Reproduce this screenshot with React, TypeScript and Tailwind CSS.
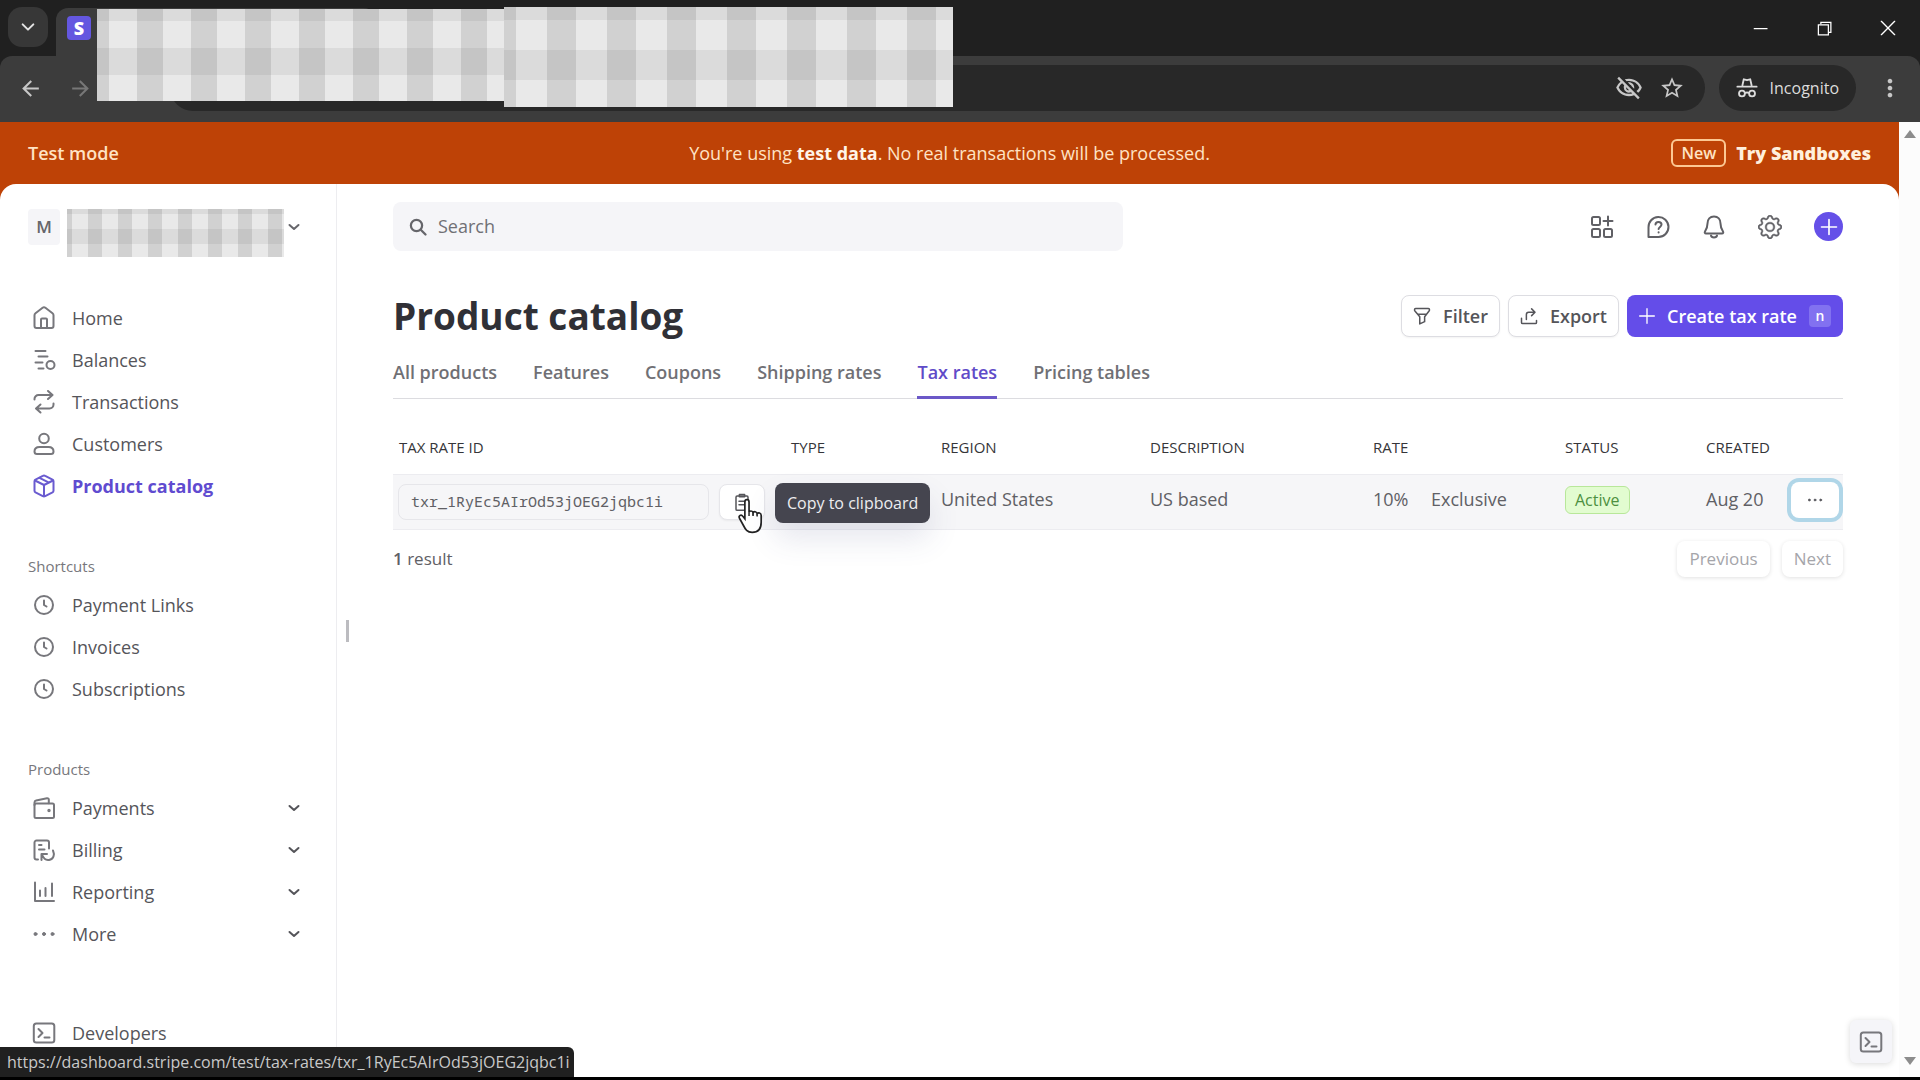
import React, { useId, useState } from "react";
import {
  MdArrowBack,
  MdArrowForward,
  MdMoreVert,
  MdOutlineVisibilityOff,
  MdStarOutline,
} from "react-icons/md";
import { BsGear } from "react-icons/bs";
import { VscChromeMinimize, VscChromeRestore } from "react-icons/vsc";

type IconProps = { className?: string; children?: React.ReactNode; strokeWidth?: number };

function Icon({ className = "size-6", children, strokeWidth = 2 }: IconProps) {
  return (
    <svg
      viewBox="0 0 24 24"
      fill="none"
      stroke="currentColor"
      strokeWidth={strokeWidth}
      strokeLinecap="round"
      strokeLinejoin="round"
      className={`shrink-0 ${className}`}
      aria-hidden="true"
    >
      {children}
    </svg>
  );
}

const icons = {
  home: (
    <>
      <path d="M2.5 9.2c0-.8.4-1.5 1-2L10.6 1.7a2.3 2.3 0 0 1 2.8 0L20.5 7.2c.6.5 1 1.2 1 2V20a2 2 0 0 1-2 2h-15a2 2 0 0 1-2-2z" />
      <path d="M9 22v-8.5a1 1 0 0 1 1-1h4a1 1 0 0 1 1 1V22" />
    </>
  ),
  balances: (
    <>
      <path d="M3.5 3h10M6.5 8.5h9M3.5 14.5h7M6.5 20.5h5" />
      <circle cx="18.5" cy="17" r="4" />
    </>
  ),
  transactions: (
    <>
      <path d="M2.5 9.5V9a4 4 0 0 1 4-4H20M16 1l4.5 4L16 9" />
      <path d="M21.5 13.5v1a4 4 0 0 1-4 4H4.5M8.5 14.5l-4.5 4 4.5 4" />
    </>
  ),
  customers: (
    <>
      <circle cx="12" cy="6.5" r="4.8" />
      <path d="M2.5 19.5c0-3.2 2.2-4.5 5-4.5h9c2.8 0 5 1.3 5 4.5 0 1.7-1 2.5-2.5 2.5H5c-1.5 0-2.5-.8-2.5-2.5z" />
    </>
  ),
  catalog: (
    <>
      <path d="M10.8 1.9a2.5 2.5 0 0 1 2.4 0l7.3 3.7c.7.4 1 1 1 1.7v9.4c0 .7-.3 1.3-1 1.7l-7.3 3.7a2.5 2.5 0 0 1-2.4 0l-7.3-3.7c-.7-.4-1-1-1-1.7V7.3c0-.7.3-1.3 1-1.7z" />
      <path d="M3 6.5l9 4.5 9-4.5M12 11v11M7.5 3.8l9 4.6" />
    </>
  ),
  clock: (
    <>
      <circle cx="12" cy="12" r="9" />
      <path d="M12 7.5V12l2.5 1.5" />
    </>
  ),
  payments: (
    <>
      <rect x="2.5" y="7.5" width="19.5" height="14.5" rx="1.5" />
      <path d="M2.5 9V6.5c0-1 .6-1.8 1.6-2L15 2.2c1-.2 1.8.4 1.8 1.4v3.6" />
      <circle cx="17" cy="14.5" r=".7" fill="currentColor" />
    </>
  ),
  billing: (
    <>
      <path d="M6 21.5H4.5a2 2 0 0 1-2-2v-15a2 2 0 0 1 2-2H15a2 2 0 0 1 2 2v6" />
      <path d="M7 7h2.5M7 11.5h5.5" />
      <path d="M9.5 22v-6h5.5M10 16.5c1.5 4 4 6 7 5.5 4.5-.8 6-5 4-9.5" />
    </>
  ),
  reporting: <path d="M3 2.5v18.5h19M8 16v-5.5M13.5 16V8M20 16V3.5" />,
  more: (
    <g fill="currentColor" strokeWidth="1">
      <circle cx="3.5" cy="12" r="1.5" />
      <circle cx="12" cy="12" r="1.5" />
      <circle cx="20.5" cy="12" r="1.5" />
    </g>
  ),
  terminal: (
    <>
      <rect x="1.8" y="2.5" width="20.5" height="19" rx="2.5" />
      <path d="M6.5 8l4 4-4 4M12.5 16.5h5" />
    </>
  ),
};

type NavItem = { label: string; icon: keyof typeof icons; active?: boolean; expandable?: boolean };

const mainNav: NavItem[] = [
  { label: "Home", icon: "home" },
  { label: "Balances", icon: "balances" },
  { label: "Transactions", icon: "transactions" },
  { label: "Customers", icon: "customers" },
  { label: "Product catalog", icon: "catalog", active: true },
];

const shortcuts: NavItem[] = [
  { label: "Payment Links", icon: "clock" },
  { label: "Invoices", icon: "clock" },
  { label: "Subscriptions", icon: "clock" },
];

const products: NavItem[] = [
  { label: "Payments", icon: "payments", expandable: true },
  { label: "Billing", icon: "billing", expandable: true },
  { label: "Reporting", icon: "reporting", expandable: true },
  { label: "More", icon: "more", expandable: true },
];

const tabs = ["All products", "Features", "Coupons", "Shipping rates", "Tax rates", "Pricing tables"];

const taxRates = [
  {
    id: "txr_1RyEc5AIrOd53jOEG2jqbc1i",
    region: "United States",
    description: "US based",
    rate: "10%",
    mode: "Exclusive",
    status: "Active",
    created: "Aug 20",
  },
];

// Checkered block that hides private text
function Mosaic({ className, cell, x, y }: { className: string; cell: number; x: number; y: number }) {
  const id = useId();
  return (
    <svg className={className} aria-hidden="true">
      <defs>
        <pattern id={`${id}c`} x={x} width={cell * 2} height={cell * 2} patternUnits="userSpaceOnUse">
          <rect width={cell - 1} height={cell * 2} fill="#000" opacity="0.1" />
        </pattern>
        <pattern id={`${id}r`} y={y} width={cell * 2} height={cell * 2} patternUnits="userSpaceOnUse">
          <rect width={cell * 2} height={cell} fill="#000" opacity="0.06" />
        </pattern>
      </defs>
      <rect width="100%" height="100%" fill="#e9e9e9" />
      <rect width="100%" height="100%" fill={`url(#${id}c)`} />
      <rect width="100%" height="100%" fill={`url(#${id}r)`} />
    </svg>
  );
}

function Chevron() {
  return (
    <Icon className="size-3" strokeWidth={4}>
      <path d="M3 8l9 8 9-8" />
    </Icon>
  );
}

function BrowserChrome() {
  return (
    <header className="relative bg-[#202020] text-[#c7c7c7]">
      <div className="flex h-14 items-end">
        <button aria-label="Search tabs" className="mb-[9px] ml-2 flex size-10 items-center justify-center rounded-[14px] bg-[#373737] text-[#e3e3e3]">
          <Icon className="size-4" strokeWidth={3}>
            <path d="M4 8l8 8 8-8" />
          </Icon>
        </button>
        <div className="ml-2 flex h-12 w-80 items-start rounded-t-xl bg-[#3c3c3c] px-[11px] pt-2">
          <span className="flex size-6 items-center justify-center rounded-sm bg-[#6457e0] text-lg font-extrabold text-white">S</span>
        </div>
        <div className="ml-auto flex h-full items-center text-white">
          <button aria-label="Minimize" className="flex w-16 justify-center">
            <VscChromeMinimize className="size-5" />
          </button>
          <button aria-label="Restore" className="flex w-16 justify-center">
            <VscChromeRestore className="size-5" />
          </button>
          <button aria-label="Close" className="flex w-16 justify-center">
            <Icon className="size-4" strokeWidth={2}>
              <path d="M2 2l20 20M22 2L2 22" />
            </Icon>
          </button>
        </div>
      </div>
      <div className="flex h-[66px] items-center rounded-t-xl bg-[#3c3c3c] pb-[2px]">
        <button aria-label="Back" className="ml-[18px]">
          <MdArrowBack className="size-[25px]" />
        </button>
        <button aria-label="Forward" className="ml-[25px] text-[#777]">
          <MdArrowForward className="size-[25px]" />
        </button>
        <div className="ml-[77px] flex h-[46px] flex-1 items-center gap-4 rounded-full bg-[#282828] pr-5">
          <input aria-label="Address" className="h-full min-w-0 flex-1 bg-transparent pl-6 outline-none" />
          <button aria-label="Third-party cookies blocked">
            <MdOutlineVisibilityOff className="size-7" />
          </button>
          <button aria-label="Bookmark">
            <MdStarOutline className="size-[26px]" />
          </button>
        </div>
        <button className="ml-[14px] flex h-[46px] items-center gap-3 rounded-full bg-[#282828] px-[17px] text-base text-[#dcdcdc]">
          <Icon className="size-[22px]">
            <path d="M7 9l1.5-6.5L12 3.5l3.5-1L17 9M1.5 10.5h21" />
            <circle cx="6.5" cy="18" r="3.2" />
            <circle cx="17.5" cy="18" r="3.2" />
            <path d="M9.7 17.5q2.3-1.2 4.6 0" />
          </Icon>
          Incognito
        </button>
        <button aria-label="Browser menu" className="mr-4 ml-5">
          <MdMoreVert className="size-7" />
        </button>
      </div>
      <Mosaic className="absolute top-[9px] left-[97px] h-[92px] w-[407px]" cell={27} x={40} y={39} />
      <Mosaic className="absolute top-[7px] left-[504px] h-[100px] w-[449px]" cell={30} x={43} y={43} />
    </header>
  );
}

function TestBanner() {
  return (
    <div className="flex h-[62px] items-center justify-between bg-[#be4206] px-7 text-[18px] text-[#ffe3c4]">
      <strong className="w-[300px] font-semibold">Test mode</strong>
      <p className="font-medium">
        You're using <strong className="font-bold text-[#fff5e8]">test data</strong>. No real transactions will be processed.
      </p>
      <div className="flex w-[300px] items-center justify-end gap-[10px]">
        <span className="flex h-7 items-center rounded-md border-2 border-[#fcc893] px-2 text-[16px] font-semibold">New</span>
        <a href="#sandboxes" className="font-extrabold whitespace-nowrap text-[#fff0dd]">Try Sandboxes</a>
      </div>
    </div>
  );
}

function NavList({ items }: { items: NavItem[] }) {
  return (
    <ul>
      {items.map((item) => {
        const content = (
          <>
            <Icon className={`size-6 ${item.active ? "text-[#6a5bd0]" : "text-[#77777c]"}`}>{icons[item.icon]}</Icon>
            <span className="flex-1 text-left">{item.label}</span>
            {item.expandable && <Chevron />}
          </>
        );
        const style = `flex h-[42px] w-full items-center gap-4 pr-9 pl-8 text-[18px] ${
          item.active ? "font-bold text-[#5f4bd0]" : "text-[#55555a]"
        }`;
        return (
          <li key={item.label}>
            {item.expandable ? (
              <button className={style}>{content}</button>
            ) : (
              <a href="#nav" className={style}>{content}</a>
            )}
          </li>
        );
      })}
    </ul>
  );
}

function Sidebar() {
  return (
    <nav className="w-[337px] shrink-0 border-r border-[#ededf0] pt-[25px]">
      <button className="flex w-full items-start pl-7">
        <span className="flex h-9 w-8 items-center justify-center rounded bg-[#f5f5f8] text-[17px] font-semibold text-[#66666b]">M</span>
        <Mosaic className="ml-[7px] h-12 w-[217px]" cell={15} x={21} y={20} />
        <span className="flex h-9 items-center pl-1 text-[#66666b]">
          <Chevron />
        </span>
      </button>
      <div className="mt-10">
        <NavList items={mainNav} />
      </div>
      <h2 className="mt-[47px] mb-[6px] pl-7 text-[15px] leading-6 text-[#77777c]">Shortcuts</h2>
      <NavList items={shortcuts} />
      <h2 className="mt-[47px] mb-[6px] pl-7 text-[15px] leading-6 text-[#77777c]">Products</h2>
      <NavList items={products} />
      <div className="mt-[57px]">
        <NavList items={[{ label: "Developers", icon: "terminal" }]} />
      </div>
    </nav>
  );
}

function TopBar() {
  return (
    <div className="flex items-center justify-between">
      <label className="flex h-[49px] w-[730px] items-center gap-[11px] rounded-lg bg-[#f5f5f8] px-4 text-[#66666b]">
        <Icon className="size-[18px]" strokeWidth={3}>
          <circle cx="10" cy="10" r="7.5" />
          <path d="M16 16l6 6" />
        </Icon>
        <input type="search" aria-label="Search" placeholder="Search" className="flex-1 bg-transparent text-[18px] outline-none placeholder:text-[#707075]" />
      </label>
      <div className="flex items-center gap-8 text-[#606065]">
        <button aria-label="Apps">
          <Icon>
            <rect x="2" y="2" width="8" height="8" rx="1.5" />
            <rect x="2" y="14" width="8" height="8" rx="1.5" />
            <rect x="14" y="14" width="8" height="8" rx="1.5" />
            <path d="M18 1.5v9M13.5 6h9" />
          </Icon>
        </button>
        <button aria-label="Help">
          <Icon>
            <path d="M2.5 22v-9.5A10 10 0 1 1 12.5 22z" />
            <path d="M9.5 9.5c.1-3.5 6-3.3 6 .1 0 2.2-2.8 2.4-2.9 4.4M12.6 17.3v.2" />
          </Icon>
        </button>
        <button aria-label="Notifications">
          <Icon>
            <path d="M12 1.5c-4 0-6.5 3-6.5 7 0 4-.8 5.5-2.5 8-.6.9-.2 2 1 2h16c1.2 0 1.6-1.1 1-2-1.7-2.5-2.5-4-2.5-8 0-4-2.5-7-6.5-7z" />
            <path d="M9 20.5c.5 2.5 5.5 2.5 6 0" />
          </Icon>
        </button>
        <button aria-label="Settings">
          <BsGear className="size-6" stroke="currentColor" strokeWidth={0.3} />
        </button>
        <button aria-label="Create" className="flex size-[29px] items-center justify-center rounded-full bg-[#6550e8] text-white">
          <Icon className="size-5" strokeWidth={2}>
            <path d="M12 3v18M3 12h18" />
          </Icon>
        </button>
      </div>
    </div>
  );
}

const outlineButton =
  "flex h-[42px] items-center gap-3 rounded-lg border border-[#dddde2] bg-white px-[11px] text-[18px] font-semibold text-[#55555a] shadow-xs";

function TaxRateTable() {
  return (
    <table className="mt-[21px] w-full table-fixed text-left text-[18px] text-[#606065]">
      <colgroup>
        <col className="w-[392px]" />
        <col className="w-[150px]" />
        <col className="w-[209px]" />
        <col className="w-[223px]" />
        <col className="w-[58px]" />
        <col className="w-[134px]" />
        <col className="w-[141px]" />
        <col className="w-[85px]" />
        <col className="w-[58px]" />
      </colgroup>
      <thead>
        <tr className="h-[54px] text-[15px] whitespace-nowrap text-[#353539] [&>th]:px-[6px] [&>th]:font-medium">
          <th>TAX RATE ID</th>
          <th>TYPE</th>
          <th>REGION</th>
          <th>DESCRIPTION</th>
          <th colSpan={2}>RATE</th>
          <th>STATUS</th>
          <th>CREATED</th>
          <th aria-label="Actions" />
        </tr>
      </thead>
      <tbody>
        {taxRates.map((t) => (
          <tr key={t.id} className="h-[55px] border-y border-[#ececf0] bg-[#f6f6f8] whitespace-nowrap [&>td]:px-[6px] [&>td]:pb-1">
            <td className="!pb-0 !pl-[5px]">
              <div className="flex items-center gap-[10px]">
                <a href="#txr" className="flex h-9 w-[311px] items-center rounded-lg border border-[#e6e6ea] pl-3 font-['Noto_Sans_Mono','DejaVu_Sans_Mono',monospace] text-[15px]">
                  {t.id}
                </a>
                <div className="relative">
                  <button aria-label="Copy to clipboard" className="flex h-9 w-[46px] items-center justify-center rounded-lg border border-[#e6e6ea] bg-white text-[#55555a] shadow-xs">
                    <Icon className="size-[18px]">
                      <rect x="4" y="4" width="16" height="19" rx="1.5" />
                      <path d="M8.5 5V2h7v3zM8 11h8M8 15.5h8" />
                    </Icon>
                  </button>
                  <svg viewBox="0 0 24 32" className="absolute top-[14px] left-[18px] h-9 w-[27px]" aria-hidden="true">
                    <path
                      d="M7 3.5c0-2.7 3.7-2.7 3.7 0V13c.3-2 3.3-1.9 3.6.2.7-1.6 3.3-1.3 3.6.8 1-1.3 3.6-.9 3.6 1.5v6c0 6-2.5 9-8 9-4.5 0-6-2.5-8-6.5l-3.3-6c-1.2-2.3 1.5-3.7 3-1.7L7 18.5z"
                      fill="#fff"
                      stroke="#222"
                      strokeWidth="1.5"
                    />
                    <path d="M10.7 13v3M14.3 13.5V16M17.9 14.5v2" stroke="#222" strokeWidth="1.3" />
                  </svg>
                  <span role="tooltip" className="absolute -top-px left-full ml-[10px] flex h-10 items-center rounded-lg bg-[#45454f] px-3 text-base text-[#ededf0] shadow-[0_16px_30px_rgba(60,66,120,0.13)]">
                    Copy to clipboard
                  </span>
                </div>
              </div>
            </td>
            <td />
            <td>{t.region}</td>
            <td>{t.description}</td>
            <td>{t.rate}</td>
            <td>{t.mode}</td>
            <td>
              <span className="inline-flex h-7 items-center rounded-md border border-[#b8e79a] bg-[#e2fcd0] px-[9px] align-middle text-[16px] text-[#4d9040]">
                {t.status}
              </span>
            </td>
            <td>{t.created}</td>
            <td className="!px-0">
              <button aria-label="More actions" className="mr-1 ml-auto flex h-9 w-12 items-center justify-center rounded-lg bg-white text-[#55555a] shadow-[0_0_0_4px_#b0d6e8]">
                <Icon className="size-4">{icons.more}</Icon>
              </button>
            </td>
          </tr>
        ))}
      </tbody>
    </table>
  );
}

function Catalog() {
  const [activeTab, setActiveTab] = useState("Tax rates");
  return (
    <main className="min-w-0 flex-1 px-14 pt-[18px]">
      <TopBar />
      <div className="mt-11 flex items-center justify-between">
        <h1 className="text-[37px] leading-[42px] font-bold text-[#303036]">Product catalog</h1>
        <div className="flex gap-2">
          <button className={outlineButton}>
            <Icon className="size-[18px]" strokeWidth={2}>
              <path d="M2 3.5q0-1.5 1.5-1.5h17q1.5 0 1.5 1.5 0 1-.6 1.8L15.5 13v6.5L9 22.5V13L2.6 5.3Q2 4.5 2 3.5zM7 9.5h10" />
            </Icon>
            Filter
          </button>
          <button className={outlineButton}>
            <Icon className="size-[18px]" strokeWidth={2}>
              <path d="M2 15v5.5a1.5 1.5 0 0 0 1.5 1.5h17a1.5 1.5 0 0 0 1.5-1.5V18M8.5 16.5V10a3 3 0 0 1 3-3H20M15.5 2.5L20 7l-4.5 4.5" />
            </Icon>
            Export
          </button>
          <button className="flex h-[42px] items-center gap-3 rounded-lg bg-[#644de9] px-3 text-[18px] font-semibold text-white">
            <Icon className="size-4" strokeWidth={2}>
              <path d="M12 1v22M1 12h22" />
            </Icon>
            Create tax rate
            <kbd className="flex size-[22px] items-center justify-center rounded bg-[#8271f0] font-['Open_Sans',sans-serif] text-sm">n</kbd>
          </button>
        </div>
      </div>
      <div role="tablist" className="mt-4 flex gap-9 border-b border-[#dcdce0]">
        {tabs.map((tab) => (
          <button
            key={tab}
            role="tab"
            aria-selected={tab === activeTab}
            onClick={() => setActiveTab(tab)}
            className={`-mb-px h-[46px] border-b-[3px] pb-1 text-[18px] font-semibold ${
              tab === activeTab ? "border-[#6b58c8] text-[#5f4bc8]" : "border-transparent text-[#707075]"
            }`}
          >
            {tab}
          </button>
        ))}
      </div>
      <TaxRateTable />
      <div className="mt-[11px] flex items-center justify-between text-[17px] text-[#606065]">
        <p>
          <strong className="font-semibold">1</strong> result
        </p>
        <div className="flex gap-3 font-medium text-[#a5a5aa]">
          <button disabled className="h-9 rounded-lg px-3 shadow-[0_1px_4px_rgba(0,0,0,0.12)]">Previous</button>
          <button disabled className="h-9 rounded-lg px-3 shadow-[0_1px_4px_rgba(0,0,0,0.12)]">Next</button>
        </div>
      </div>
    </main>
  );
}

export default function App() {
  return (
    <div className="flex min-h-screen flex-col border-b-[3px] border-black bg-white font-['Open_Sans',sans-serif]">
      <BrowserChrome />
      <div className="relative flex flex-1">
        <div className="flex min-w-0 flex-1 flex-col bg-[#be4206]">
          <TestBanner />
          <div className="relative flex flex-1 rounded-t-2xl bg-white">
            <Sidebar />
            <span className="absolute top-[436px] left-[346px] h-[22px] w-[3px] bg-[#bcbcc0]" />
            <Catalog />
          </div>
        </div>
        <div className="flex w-[21px] flex-col items-center justify-between bg-[#fcfcfc] py-2 text-[#8c8c8c]">
          <svg viewBox="0 0 12 8" className="h-2 w-3" aria-hidden="true">
            <path d="M0 8l6-8 6 8z" fill="currentColor" />
          </svg>
          <svg viewBox="0 0 12 8" className="mb-1 h-2 w-3" aria-hidden="true">
            <path d="M0 0l6 8 6-8z" fill="currentColor" />
          </svg>
        </div>
        <button aria-label="Open developer tools" className="absolute right-7 bottom-[14px] flex h-[43px] w-[42px] items-center justify-center rounded-md bg-[#f5f5f9] text-[#77777c] shadow-[0_1px_6px_rgba(0,0,0,0.15)]">
          <Icon>{icons.terminal}</Icon>
        </button>
        <div className="absolute bottom-0 left-0 flex h-[30px] items-center rounded-tr-md bg-[#202020] pr-1 pl-[7px] text-[16px] text-[#c9c9c9]">
          https://dashboard.stripe.com/test/tax-rates/txr_1RyEc5AIrOd53jOEG2jqbc1i
        </div>
      </div>
    </div>
  );
}
